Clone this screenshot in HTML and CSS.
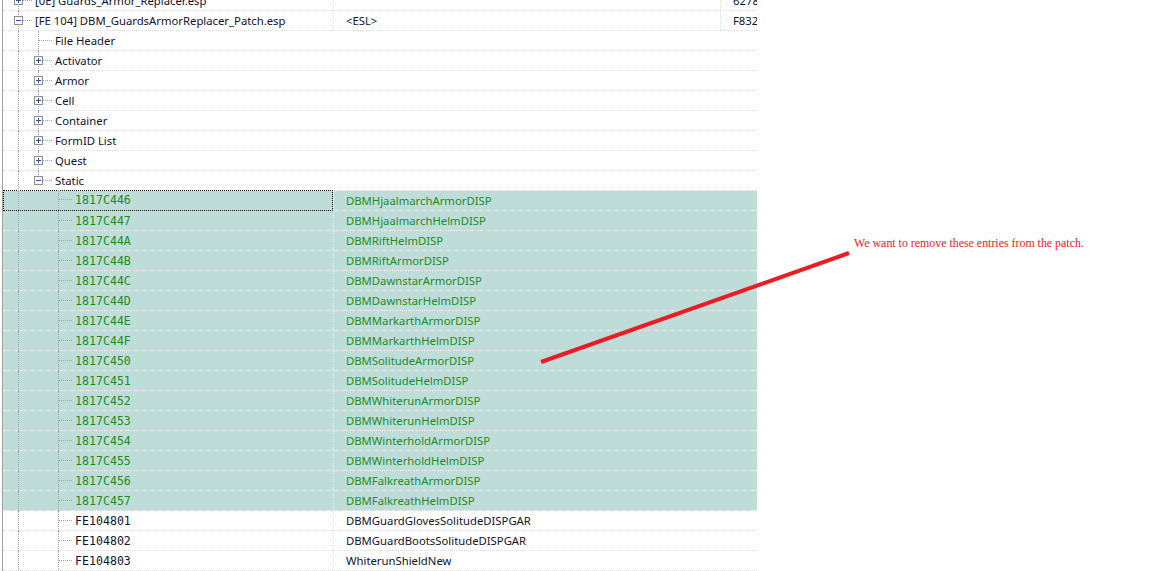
FILE: index.html
```html
<!DOCTYPE html>
<html lang="en">
<head>
    <meta charset="UTF-8">
    <title>xEdit - DBM_GuardsArmorReplacer_Patch.esp</title>
    <link rel="stylesheet" href="styles.css">
</head>
<body>
    <div class="tree">
        <div class="row plugin">
            <div class="c1"><span class="ind t"><svg class="box" viewBox="0 0 9 9"><rect x="0.5" y="0.5" width="8" height="8"/><path d="M2 4.5h5M4.5 2v5"/></svg></span><span class="lbl">[0E] Guards_Armor_Replacer.esp</span></div>
            <div class="c2"></div>
            <div class="c3">6278D94A</div>
        </div>
        <div class="row plugin">
            <div class="c1"><span class="ind t"><svg class="box" viewBox="0 0 9 9"><rect x="0.5" y="0.5" width="8" height="8"/><path d="M2 4.5h5"/></svg></span><span class="lbl">[FE 104] DBM_GuardsArmorReplacer_Patch.esp</span></div>
            <div class="c2">&lt;ESL&gt;</div>
            <div class="c3">F832A1C0</div>
        </div>
        <div class="row group">
            <div class="c1"><span class="ind v"></span><span class="ind t"></span><span class="lbl">File Header</span></div>
        </div>
        <div class="row group">
            <div class="c1"><span class="ind v"></span><span class="ind t"><svg class="box" viewBox="0 0 9 9"><rect x="0.5" y="0.5" width="8" height="8"/><path d="M2 4.5h5M4.5 2v5"/></svg></span><span class="lbl">Activator</span></div>
        </div>
        <div class="row group">
            <div class="c1"><span class="ind v"></span><span class="ind t"><svg class="box" viewBox="0 0 9 9"><rect x="0.5" y="0.5" width="8" height="8"/><path d="M2 4.5h5M4.5 2v5"/></svg></span><span class="lbl">Armor</span></div>
        </div>
        <div class="row group">
            <div class="c1"><span class="ind v"></span><span class="ind t"><svg class="box" viewBox="0 0 9 9"><rect x="0.5" y="0.5" width="8" height="8"/><path d="M2 4.5h5M4.5 2v5"/></svg></span><span class="lbl">Cell</span></div>
        </div>
        <div class="row group">
            <div class="c1"><span class="ind v"></span><span class="ind t"><svg class="box" viewBox="0 0 9 9"><rect x="0.5" y="0.5" width="8" height="8"/><path d="M2 4.5h5M4.5 2v5"/></svg></span><span class="lbl">Container</span></div>
        </div>
        <div class="row group">
            <div class="c1"><span class="ind v"></span><span class="ind t"><svg class="box" viewBox="0 0 9 9"><rect x="0.5" y="0.5" width="8" height="8"/><path d="M2 4.5h5M4.5 2v5"/></svg></span><span class="lbl">FormID List</span></div>
        </div>
        <div class="row group">
            <div class="c1"><span class="ind v"></span><span class="ind t"><svg class="box" viewBox="0 0 9 9"><rect x="0.5" y="0.5" width="8" height="8"/><path d="M2 4.5h5M4.5 2v5"/></svg></span><span class="lbl">Quest</span></div>
        </div>
        <div class="row group">
            <div class="c1"><span class="ind v"></span><span class="ind l"><svg class="box" viewBox="0 0 9 9"><rect x="0.5" y="0.5" width="8" height="8"/><path d="M2 4.5h5"/></svg></span><span class="lbl">Static</span></div>
        </div>

        <div class="row rec sel">
            <div class="c1 focus"><span class="ind v"></span><span class="ind"></span><span class="ind t"></span><span class="lbl id">1817C446</span></div>
            <div class="c2">DBMHjaalmarchArmorDISP</div>
        </div>
        <div class="row rec sel">
            <div class="c1"><span class="ind v"></span><span class="ind"></span><span class="ind t"></span><span class="lbl id">1817C447</span></div>
            <div class="c2">DBMHjaalmarchHelmDISP</div>
        </div>
        <div class="row rec sel">
            <div class="c1"><span class="ind v"></span><span class="ind"></span><span class="ind t"></span><span class="lbl id">1817C44A</span></div>
            <div class="c2">DBMRiftHelmDISP</div>
        </div>
        <div class="row rec sel">
            <div class="c1"><span class="ind v"></span><span class="ind"></span><span class="ind t"></span><span class="lbl id">1817C44B</span></div>
            <div class="c2">DBMRiftArmorDISP</div>
        </div>
        <div class="row rec sel">
            <div class="c1"><span class="ind v"></span><span class="ind"></span><span class="ind t"></span><span class="lbl id">1817C44C</span></div>
            <div class="c2">DBMDawnstarArmorDISP</div>
        </div>
        <div class="row rec sel">
            <div class="c1"><span class="ind v"></span><span class="ind"></span><span class="ind t"></span><span class="lbl id">1817C44D</span></div>
            <div class="c2">DBMDawnstarHelmDISP</div>
        </div>
        <div class="row rec sel">
            <div class="c1"><span class="ind v"></span><span class="ind"></span><span class="ind t"></span><span class="lbl id">1817C44E</span></div>
            <div class="c2">DBMMarkarthArmorDISP</div>
        </div>
        <div class="row rec sel">
            <div class="c1"><span class="ind v"></span><span class="ind"></span><span class="ind t"></span><span class="lbl id">1817C44F</span></div>
            <div class="c2">DBMMarkarthHelmDISP</div>
        </div>
        <div class="row rec sel">
            <div class="c1"><span class="ind v"></span><span class="ind"></span><span class="ind t"></span><span class="lbl id">1817C450</span></div>
            <div class="c2">DBMSolitudeArmorDISP</div>
        </div>
        <div class="row rec sel">
            <div class="c1"><span class="ind v"></span><span class="ind"></span><span class="ind t"></span><span class="lbl id">1817C451</span></div>
            <div class="c2">DBMSolitudeHelmDISP</div>
        </div>
        <div class="row rec sel">
            <div class="c1"><span class="ind v"></span><span class="ind"></span><span class="ind t"></span><span class="lbl id">1817C452</span></div>
            <div class="c2">DBMWhiterunArmorDISP</div>
        </div>
        <div class="row rec sel">
            <div class="c1"><span class="ind v"></span><span class="ind"></span><span class="ind t"></span><span class="lbl id">1817C453</span></div>
            <div class="c2">DBMWhiterunHelmDISP</div>
        </div>
        <div class="row rec sel">
            <div class="c1"><span class="ind v"></span><span class="ind"></span><span class="ind t"></span><span class="lbl id">1817C454</span></div>
            <div class="c2">DBMWinterholdArmorDISP</div>
        </div>
        <div class="row rec sel">
            <div class="c1"><span class="ind v"></span><span class="ind"></span><span class="ind t"></span><span class="lbl id">1817C455</span></div>
            <div class="c2">DBMWinterholdHelmDISP</div>
        </div>
        <div class="row rec sel">
            <div class="c1"><span class="ind v"></span><span class="ind"></span><span class="ind t"></span><span class="lbl id">1817C456</span></div>
            <div class="c2">DBMFalkreathArmorDISP</div>
        </div>
        <div class="row rec sel">
            <div class="c1"><span class="ind v"></span><span class="ind"></span><span class="ind t"></span><span class="lbl id">1817C457</span></div>
            <div class="c2">DBMFalkreathHelmDISP</div>
        </div>

        <div class="row rec">
            <div class="c1"><span class="ind v"></span><span class="ind"></span><span class="ind t"></span><span class="lbl id">FE104801</span></div>
            <div class="c2">DBMGuardGlovesSolitudeDISPGAR</div>
        </div>
        <div class="row rec">
            <div class="c1"><span class="ind v"></span><span class="ind"></span><span class="ind t"></span><span class="lbl id">FE104802</span></div>
            <div class="c2">DBMGuardBootsSolitudeDISPGAR</div>
        </div>
        <div class="row rec">
            <div class="c1"><span class="ind v"></span><span class="ind"></span><span class="ind t"></span><span class="lbl id">FE104803</span></div>
            <div class="c2">WhiterunShieldNew</div>
        </div>
    </div>

    <!-- annotation drawn on top of the screenshot -->
    <svg class="arrow" width="1158" height="571" viewBox="0 0 1158 571">
        <line x1="541" y1="362" x2="849" y2="253"/>
    </svg>
    <p class="note">We want to remove these entries from the patch.</p>
</body>
</html>
```

FILE: styles.css
```css
body {
    margin: 0;
    background-color: white;
    font-family: "Noto Sans", "Liberation Sans", sans-serif;
    font-size: 11.3px;
    color: #12122e;
    overflow: hidden;
    height: 571px;
    position: relative;
}
.tree {
    width: 754px;
    margin: -9px 0 0 2px;
    border-left: 1px solid #a0a0a0;
}
.row {
    display: flex;
    height: 20px;
    box-sizing: border-box;
    border-bottom: 1px dotted #dcdcdc;
    line-height: 19px;
    white-space: nowrap;
}
.c1 {
    display: flex;
    width: 330px;
    padding-left: 5px;
    box-sizing: border-box;
    flex: none;
}
.group .c1 {
    width: 100%;
}
.c2 {
    width: 387px;
    padding-left: 12px;
    box-sizing: border-box;
    border-left: 1px dotted #dcdcdc;
    flex: none;
}
.c3 {
    flex: 1;
    padding-left: 12px;
    border-left: 1px dotted #dcdcdc;
    overflow: hidden;
}
.ind {
    position: relative;
    width: 20px;
    height: 100%;
    flex: none;
}
.ind.v::before,
.ind.t::before {
    content: "";
    position: absolute;
    left: 10px;
    top: 0;
    bottom: -1px;
    border-left: 1px dotted #a0a0a0;
}
.ind.l::before {
    content: "";
    position: absolute;
    left: 10px;
    top: 0;
    height: 10px;
    border-left: 1px dotted #a0a0a0;
}
.ind.t::after,
.ind.l::after {
    content: "";
    position: absolute;
    left: 11px;
    top: 9px;
    width: 13px;
    border-top: 1px dotted #a0a0a0;
}
.box {
    position: absolute;
    left: 6px;
    top: 5px;
    width: 9px;
    height: 9px;
    z-index: 1;
}
.box rect {
    fill: white;
    stroke: #8e8f8f;
    stroke-width: 1;
}
.box path {
    stroke: #3450a0;
    stroke-width: 1;
    fill: none;
}
.lbl {
    padding-left: 7px;
}
.id {
    font-family: "DejaVu Sans Mono", "Liberation Mono", monospace;
    font-size: 11.6px;
    padding-top: 1px;
}
.sel {
    background-color: #bfddd8;
    color: #1f8a1f;
    border-bottom-color: white;
}
.sel .c2 {
    border-left-color: white;
}
.focus {
    outline: 1px dotted #000;
    outline-offset: -1px;
    margin-top: -1px;
    height: 21px;
}
.arrow {
    position: absolute;
    left: 0;
    top: 0;
    pointer-events: none;
}
.arrow line {
    stroke: #ed1c24;
    stroke-width: 4;
}
.note {
    position: absolute;
    left: 854px;
    top: 236px;
    margin: 0;
    font-family: "Liberation Serif", serif;
    font-size: 11.9px;
    color: #ed1c24;
}
```
